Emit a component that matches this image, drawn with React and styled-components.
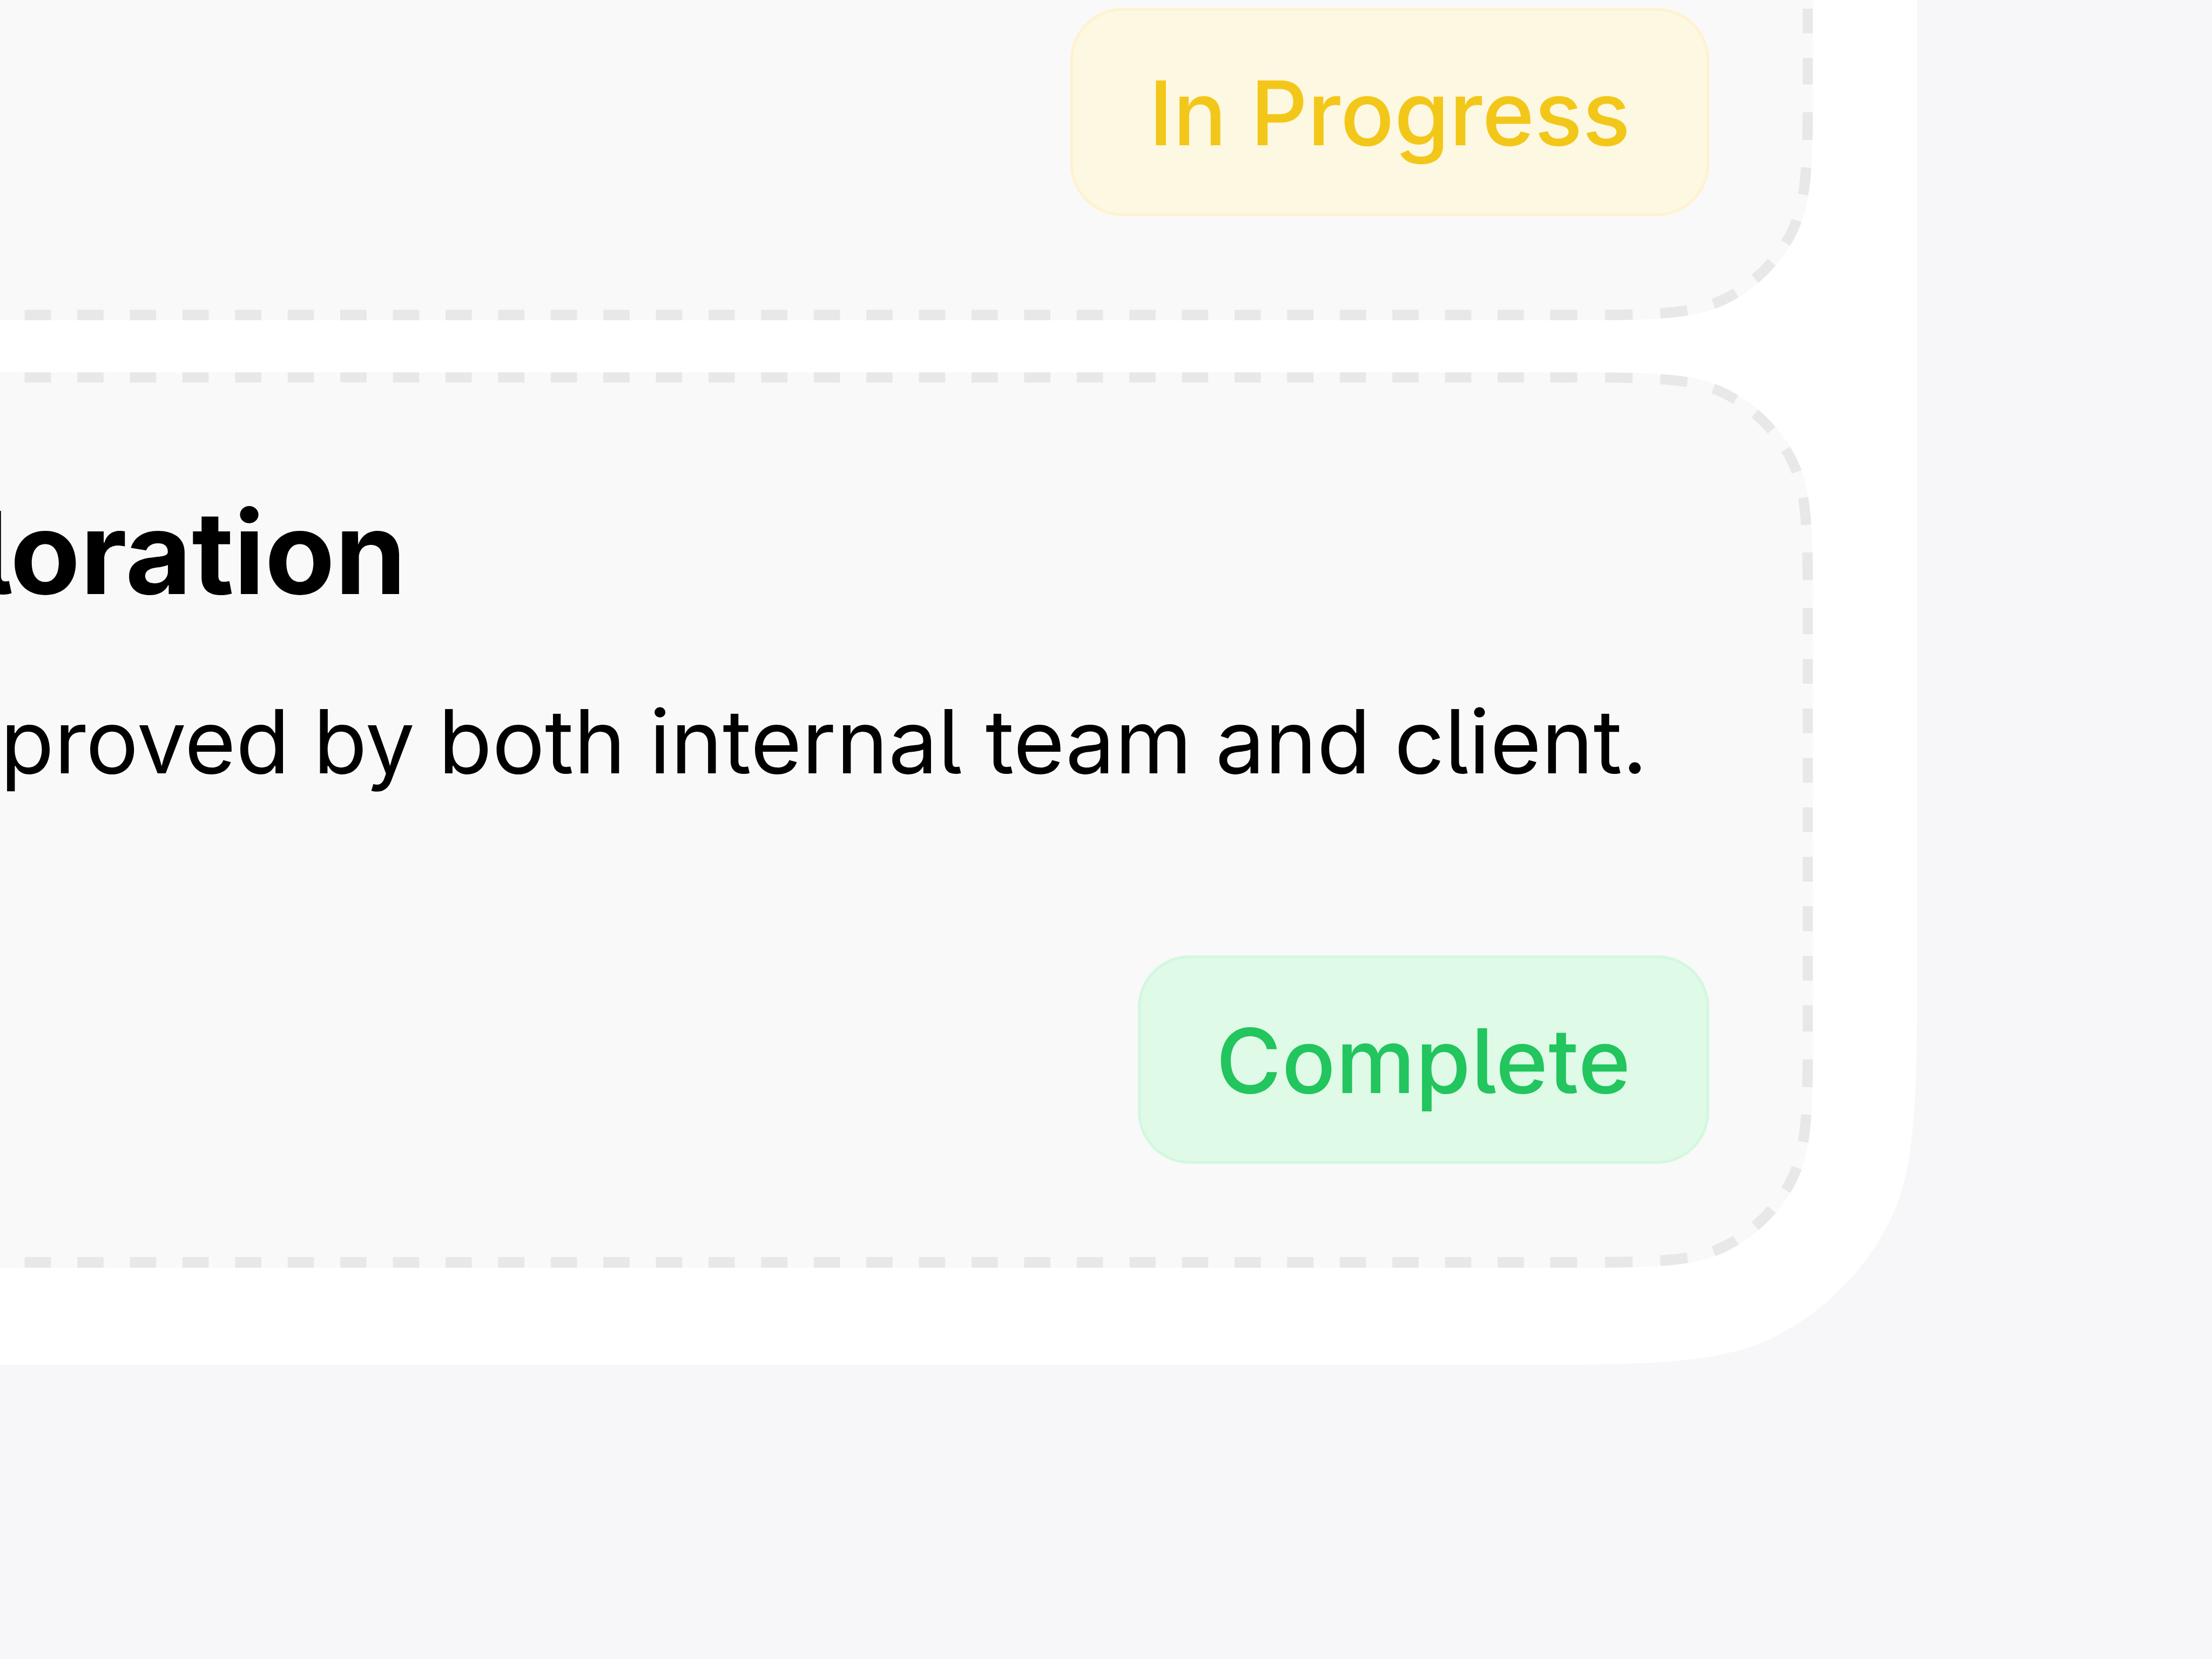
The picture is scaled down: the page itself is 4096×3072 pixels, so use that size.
import React from "react";
import styled, { createGlobalStyle } from "styled-components";

const UNIT = 4.8185;
const u = (n) => `${(n * UNIT).toFixed(2)}px`;

const GlobalStyle = createGlobalStyle`
  body {
    margin: 0;
    background: #f7f7f9;
    font-family: Inter, "Liberation Sans", sans-serif;
    overflow: hidden;
  }
`;

const CARD = { width: 1000.6, height: 344.1, radius: 60 };
const PANEL = { width: 1080.6, height: 765.5, radius: 100 };
const SMOOTHING = 0.6;
const DASH = 10;
const BORDER = 4;

// One smoothed corner, seen as the top right one of a box whose corner is at 0,0.
// Returns the points of ease-in curve, arc and ease-out curve.
const smoothCorner = (r) => {
	const rad = (deg) => (deg * Math.PI) / 180;
	const p = (1 + SMOOTHING) * r;
	const theta = 90 * (1 - SMOOTHING);
	const arc = Math.sin(rad(theta / 2)) * r * Math.SQRT2;
	const alpha = (90 - theta) / 2;
	const p3p4 = r * Math.tan(rad(alpha / 2));
	const beta = 45 * SMOOTHING;
	const c = p3p4 * Math.cos(rad(beta));
	const d = c * Math.tan(rad(beta));
	const b = (p - arc - c - d) / 3;
	const a = 2 * b;
	return [
		[[-p, 0], [-p + a, 0], [-p + a + b, 0], [-p + a + b + c, d]],
		[[-p + a + b + c, d], [-d, p - a - b - c]],
		[[-d, p - a - b - c], [0, p - a - b], [0, p - a], [0, p]]
	];
};

// Clockwise outline of the box, one entry per segment.
const outline = ({ width, height, radius }) => {
	const w = width * UNIT;
	const h = height * UNIT;
	const r = radius * UNIT;
	const p = (1 + SMOOTHING) * r;
	const corner = smoothCorner(r);
	const spots = [
		([x, y]) => [w + x, y],
		([x, y]) => [w - y, h + x],
		([x, y]) => [-x, h - y],
		([x, y]) => [y, -x]
	];
	const arcLength = r * (Math.PI / 2) * (1 - SMOOTHING);
	const easeLength = r * 1.0624;
	const segments = [];
	spots.forEach((spot, i) => {
		const [easeIn, arc, easeOut] = corner.map((points) => points.map(spot));
		segments.push({ from: easeIn[0], to: `C ${easeIn.slice(1).join(" ")}`, length: easeLength });
		segments.push({ from: arc[0], to: `A ${r} ${r} 0 0 1 ${arc[1]}`, length: arcLength });
		segments.push({ from: easeOut[0], to: `C ${easeOut.slice(1).join(" ")}`, length: easeLength });
		const next = spots[(i + 1) % 4]([-p, 0]);
		segments.push({ from: easeOut[3], to: `L ${next}`, length: (i % 2 ? w : h) - 2 * p });
	});
	return segments;
};

const outlinePath = (box) => {
	const segments = outline(box);
	return `M ${segments[0].from} ${segments.map((s) => s.to).join(" ")} Z`;
};

const Page = styled.main`
  box-sizing: border-box;
  width: 4096px;
  height: 3072px;
  display: flex;
  justify-content: flex-end;
  align-items: flex-end;
  padding: 0 546px 544.7px 0;
  overflow: hidden;
`;

const Panel = styled.section`
  box-sizing: border-box;
  flex: none;
  width: ${u(PANEL.width)};
  height: ${u(PANEL.height)};
  display: flex;
  flex-direction: column;
  justify-content: flex-end;
  gap: ${u(20)};
  padding: ${u(40)} ${u(40)} 179.8px;
  background: #ffffff;
  clip-path: path("${outlinePath(PANEL)}");
`;

const Card = styled.article`
  position: relative;
  box-sizing: border-box;
  flex: none;
  width: ${u(CARD.width)};
  height: ${u(CARD.height)};
  display: flex;
  flex-direction: column;
  padding: 206.8px ${u(40)} ${u(40)} 1464.5px;
  background: #f9f9f9;
  clip-path: path("${outlinePath(CARD)}");
`;

const Dashes = styled.svg`
  position: absolute;
  inset: 0;
  width: 100%;
  height: 100%;
  fill: none;
  stroke: #e8e8e8;
  stroke-width: ${BORDER * 2 * UNIT};
`;

const Title = styled.h2`
  margin: 0 0 104.7px -43px;
  font-size: 212px;
  line-height: 254px;
  font-weight: 700;
  white-space: nowrap;
  color: #000000;
  font-feature-settings: "cv05";
`;

const Description = styled.p`
  margin: 0;
  font-size: 163px;
  line-height: 236px;
  font-weight: 400;
  word-spacing: -2.5px;
  white-space: nowrap;
  color: #000000;
  font-feature-settings: "cv05";
`;

const Footer = styled.div`
  display: flex;
  justify-content: flex-end;
  margin-top: auto;
`;

const TONES = {
	progress: { width: 1182.6, spacing: 0, color: "#f3c719", background: "#fdf8e1", border: "#fef2d0" },
	complete: { width: 1057.2, spacing: 0.8, color: "#22c55e", background: "#dffae7", border: "#d3f7e0" }
};

const Badge = styled.span`
  box-sizing: border-box;
  display: flex;
  align-items: center;
  justify-content: center;
  width: ${({ $tone }) => TONES[$tone].width}px;
  height: ${u(80)};
  padding-top: 3px;
  border: 5px solid ${({ $tone }) => TONES[$tone].border};
  border-radius: ${u(20)};
  background: ${({ $tone }) => TONES[$tone].background};
  color: ${({ $tone }) => TONES[$tone].color};
  font-size: 165px;
  font-weight: 500;
  letter-spacing: ${({ $tone }) => TONES[$tone].spacing}px;
  white-space: nowrap;
  font-feature-settings: "cv05";
`;

// Every segment starts and ends on half a dash, so the dashes stretch a bit to fit.
const DashedBorder = () => (
	<Dashes aria-hidden="true">
		{outline(CARD).map(({ from, to, length }, i) => {
			const count = Math.round(length / (2 * DASH * UNIT));
			return (
				<path
					key={i}
					d={`M ${from} ${to}`}
					pathLength={count * 2}
					strokeDasharray="1 1"
					strokeDashoffset="0.5"
				/>
			);
		})}
	</Dashes>
);

const TaskCard = ({ title, description, status, tone }) => (
	<Card>
		<DashedBorder />
		{title && <Title>{title}</Title>}
		{description && <Description>{description}</Description>}
		<Footer>
			<Badge $tone={tone}>{status}</Badge>
		</Footer>
	</Card>
);

const App = () => (
	<React.Fragment>
		<GlobalStyle />
		<Page>
			<Panel>
				<TaskCard status="In Progress" tone="progress" />
				<TaskCard
					title="loration"
					description="proved by both internal team and client."
					status="Complete"
					tone="complete"
				/>
			</Panel>
		</Page>
	</React.Fragment>
);

export default App;
